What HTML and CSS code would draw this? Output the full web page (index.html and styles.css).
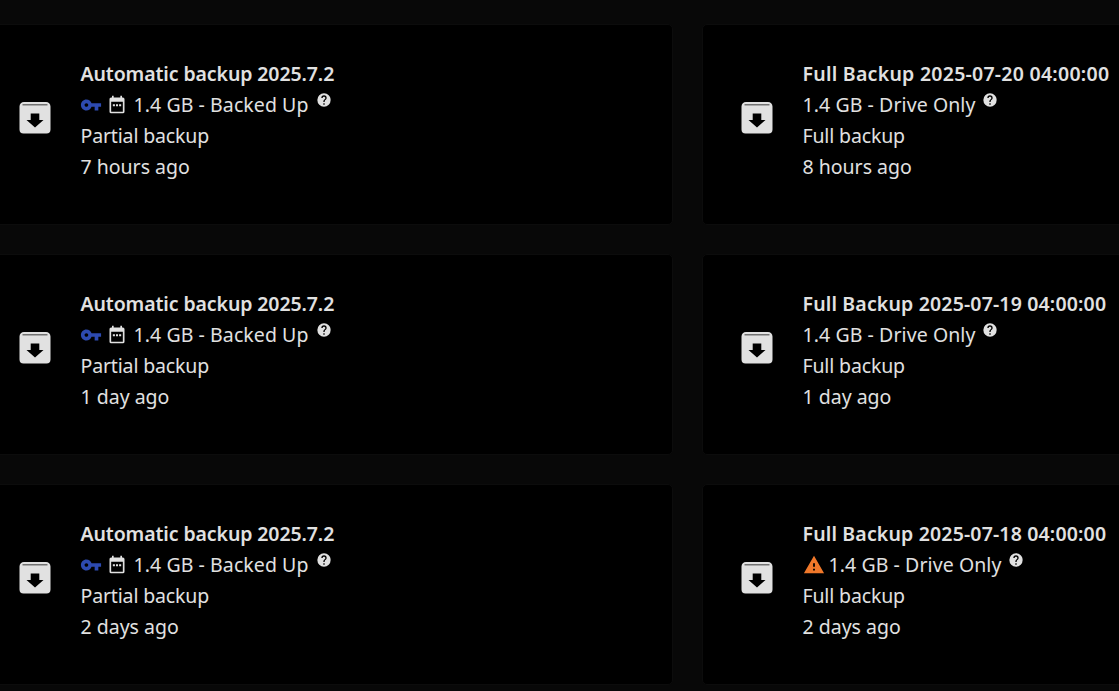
FILE: index.html
```html
<!DOCTYPE html>
<html lang="en">
<head>
    <meta charset="UTF-8">
    <meta name="viewport" content="width=device-width, initial-scale=1.0">
    <title>Backups</title>
    <link rel="stylesheet" href="styles.css">
</head>
<body>
    <svg class="sprites" aria-hidden="true">
        <symbol id="archive" viewBox="0 0 32 32">
            <path fill-rule="evenodd" d="M5 0H27A4.5 4.5 0 0 1 31.5 4.5V27.5A4 4 0 0 1 27.5 31.5H4.5A4 4 0 0 1 .5 27.5V4.5A4.5 4.5 0 0 1 5 0ZM3.5 2.6V3.2H28.5V2.6ZM11.7 11.5V18H7.5L16 25.5L24.5 18H20.3V11.5Z"/>
        </symbol>
        <symbol id="key" viewBox="0 0 24 24">
            <path d="M7 14C5.9 14 5 13.1 5 12S5.9 10 7 10 9 10.9 9 12 8.1 14 7 14M12.6 10C11.8 7.7 9.6 6 7 6C3.7 6 1 8.7 1 12S3.7 18 7 18C9.6 18 11.8 16.3 12.6 14H16V18H20V14H23V10H12.6Z"/>
        </symbol>
        <symbol id="calendar" viewBox="0 0 24 24">
            <path d="M19 20H5V8H19M16 1V3H8V1H6V3H5C3.89 3 3 3.89 3 5V20A2 2 0 0 0 5 22H19A2 2 0 0 0 21 20V5C21 3.89 20.1 3 19 3H18V1M7 11H9.5V13.5H7M10.75 11H13.25V13.5H10.75M14.5 11H17V13.5H14.5Z"/>
        </symbol>
        <symbol id="alert" viewBox="0 0 24 24">
            <path d="M13 14H11V10H13M13 18H11V16H13M1 21H23L12 2L1 21Z"/>
        </symbol>
        <symbol id="help" viewBox="0 0 24 24">
            <path d="M15.07 11.25L14.17 12.17C13.45 12.89 13 13.5 13 15H11V14.5C11 13.39 11.45 12.39 12.17 11.67L13.41 10.41C13.78 10.05 14 9.55 14 9C14 7.89 13.1 7 12 7A2 2 0 0 0 10 9H8A4 4 0 0 1 12 5A4 4 0 0 1 16 9C16 9.88 15.64 10.67 15.07 11.25M13 19H11V17H13M12 2A10 10 0 0 0 2 12A10 10 0 0 0 12 22A10 10 0 0 0 22 12C22 6.47 17.5 2 12 2Z"/>
        </symbol>
    </svg>

    <div class="backup-grid">
        <div class="backup-card">
            <svg class="backup-icon"><use href="#archive"/></svg>
            <div class="backup-info">
                <div class="backup-name">Automatic backup 2025.7.2</div>
                <div class="backup-meta">
                    <svg class="icon-key"><use href="#key"/></svg>
                    <svg class="icon-calendar"><use href="#calendar"/></svg>
                    <span>1.4 GB - Backed Up</span>
                    <svg class="icon-help"><use href="#help"/></svg>
                </div>
                <div class="backup-type">Partial backup</div>
                <div>7 hours ago</div>
            </div>
        </div>
        <div class="backup-card">
            <svg class="backup-icon"><use href="#archive"/></svg>
            <div class="backup-info">
                <div class="backup-name full">Full Backup 2025-07-20 04:00:00</div>
                <div class="backup-meta">
                    <span>1.4 GB - Drive Only</span>
                    <svg class="icon-help"><use href="#help"/></svg>
                </div>
                <div class="backup-type">Full backup</div>
                <div>8 hours ago</div>
            </div>
        </div>
        <div class="backup-card">
            <svg class="backup-icon"><use href="#archive"/></svg>
            <div class="backup-info">
                <div class="backup-name">Automatic backup 2025.7.2</div>
                <div class="backup-meta">
                    <svg class="icon-key"><use href="#key"/></svg>
                    <svg class="icon-calendar"><use href="#calendar"/></svg>
                    <span>1.4 GB - Backed Up</span>
                    <svg class="icon-help"><use href="#help"/></svg>
                </div>
                <div class="backup-type">Partial backup</div>
                <div>1 day ago</div>
            </div>
        </div>
        <div class="backup-card">
            <svg class="backup-icon"><use href="#archive"/></svg>
            <div class="backup-info">
                <div class="backup-name full tight">Full Backup 2025-07-19 04:00:00</div>
                <div class="backup-meta">
                    <span>1.4 GB - Drive Only</span>
                    <svg class="icon-help"><use href="#help"/></svg>
                </div>
                <div class="backup-type">Full backup</div>
                <div>1 day ago</div>
            </div>
        </div>
        <div class="backup-card">
            <svg class="backup-icon"><use href="#archive"/></svg>
            <div class="backup-info">
                <div class="backup-name">Automatic backup 2025.7.2</div>
                <div class="backup-meta">
                    <svg class="icon-key"><use href="#key"/></svg>
                    <svg class="icon-calendar"><use href="#calendar"/></svg>
                    <span>1.4 GB - Backed Up</span>
                    <svg class="icon-help"><use href="#help"/></svg>
                </div>
                <div class="backup-type">Partial backup</div>
                <div>2 days ago</div>
            </div>
        </div>
        <div class="backup-card">
            <svg class="backup-icon"><use href="#archive"/></svg>
            <div class="backup-info">
                <div class="backup-name full tight">Full Backup 2025-07-18 04:00:00</div>
                <div class="backup-meta">
                    <svg class="icon-alert"><use href="#alert"/></svg>
                    <span>1.4 GB - Drive Only</span>
                    <svg class="icon-help"><use href="#help"/></svg>
                </div>
                <div class="backup-type">Full backup</div>
                <div>2 days ago</div>
            </div>
        </div>
    </div>
</body>
</html>
```

FILE: styles.css
```css
html, body {
    height: 100%;
}
body {
    margin: 0;
    overflow: hidden;
    background-color: #080808;
    color: #e1e1e1;
    font-family: "Noto Sans", "Open Sans", sans-serif;
    font-size: 19.5px;
    line-height: 31px;
}
.sprites {
    display: none;
}
.backup-grid {
    display: grid;
    grid-template-columns: 693px 693px;
    grid-auto-rows: 201px;
    column-gap: 29px;
    row-gap: 29px;
    margin-left: -20px;
    padding-top: 24px;
}
.backup-card {
    display: flex;
    align-items: flex-start;
    gap: 29.5px;
    box-sizing: border-box;
    padding: 33px 0 0 38px;
    background-color: #000;
    border: 1px solid #0c0c0c;
    border-radius: 5px;
}
.backup-icon {
    flex: none;
    width: 32px;
    height: 32px;
    margin-top: 44px;
    fill: #e1e1e1;
}
.backup-name {
    font-weight: 600;
    letter-spacing: -0.1px;
    white-space: nowrap;
}
.backup-name.full {
    letter-spacing: 0.26px;
}
.backup-name.full.tight {
    letter-spacing: 0.16px;
}
.backup-meta {
    display: flex;
    align-items: center;
    letter-spacing: 0.08px;
    white-space: nowrap;
}
.backup-type {
    letter-spacing: -0.15px;
}
.icon-key {
    width: 22px;
    height: 22px;
    margin-left: -1px;
    fill: #2d4ab0;
}
.icon-calendar {
    width: 20px;
    height: 20px;
    margin-left: 5.5px;
    margin-right: 6.5px;
    fill: #e1e1e1;
}
.icon-alert {
    width: 22px;
    height: 22px;
    margin-right: 4px;
    fill: #f0782a;
}
.icon-help {
    width: 16px;
    height: 16px;
    margin-left: 7px;
    margin-bottom: 9px;
    fill: #e1e1e1;
}
```
